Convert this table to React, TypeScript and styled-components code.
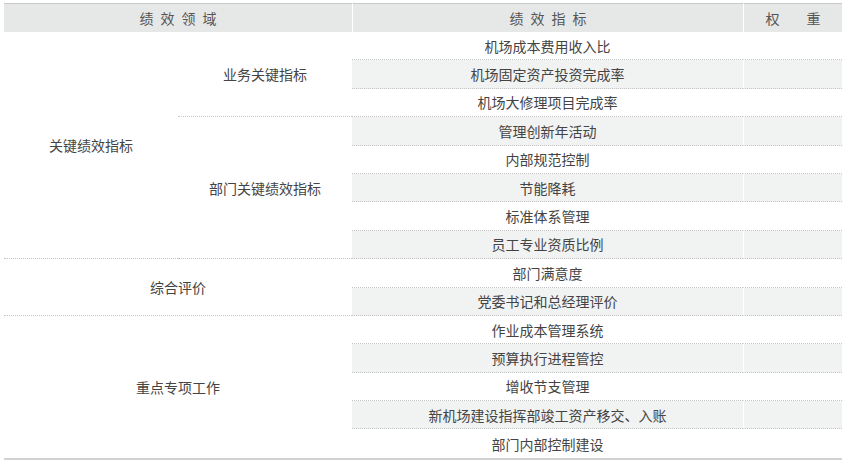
import React from "react";
import styled, { createGlobalStyle } from "styled-components";

const rows = [
  "机场成本费用收入比",
  "机场固定资产投资完成率",
  "机场大修理项目完成率",
  "管理创新年活动",
  "内部规范控制",
  "节能降耗",
  "标准体系管理",
  "员工专业资质比例",
  "部门满意度",
  "党委书记和总经理评价",
  "作业成本管理系统",
  "预算执行进程管控",
  "增收节支管理",
  "新机场建设指挥部竣工资产移交、入账",
  "部门内部控制建设",
];

// areas on the left side: [text, col start, col span, row start, row span, dotted bottom]
const areas: [string, number, number, number, number, boolean][] = [
  ["关键绩效指标", 1, 1, 2, 8, true],
  ["业务关键指标", 2, 1, 2, 3, true],
  ["部门关键绩效指标", 2, 1, 5, 5, true],
  ["综合评价", 1, 2, 10, 2, true],
  ["重点专项工作", 1, 2, 12, 5, false],
];

const App = () => {
  return (
    <>
      <Global />
      <Page>
        <Table>
          <Head $col="1 / span 2">
            <Spaced $gap="7px">绩效领域</Spaced>
          </Head>
          <Head $col="3" $divider>
            <Spaced $gap="7px">绩效指标</Spaced>
          </Head>
          <Head $col="4" $divider>
            <Spaced $gap="27px">权重</Spaced>
          </Head>

          {areas.map(([text, col, span, row, rspan, dotted]) => (
            <Area
              key={text}
              style={{
                gridColumn: `${col} / span ${span}`,
                gridRow: `${row} / span ${rspan}`,
              }}
              $dotted={dotted}
            >
              {text}
            </Area>
          ))}

          {rows.map((r, i) => (
            <React.Fragment key={r}>
              <Indicator $row={i + 2} $shade={i % 2 === 1} $last={i === rows.length - 1}>
                {r}
              </Indicator>
              <Weight $row={i + 2} $shade={i % 2 === 1} $last={i === rows.length - 1} />
            </React.Fragment>
          ))}
        </Table>
      </Page>
    </>
  );
};

export default App;

const Global = createGlobalStyle`
  body {
    margin: 0;
    background: #ffffff;
    font-family: "Noto Sans CJK SC", "Noto Sans", sans-serif;
  }
`;

const Page = styled.div`
  padding: 3px 4px 0 4px;
`;

const Table = styled.div`
  width: 838px;
  display: grid;
  grid-template-columns: 174px 174px 391px 99px;
  grid-template-rows: 29px repeat(15, 28.4px);
  border-bottom: 2px solid #d2d2d2;
  color: #444444;
  font-size: 14px;
`;

const Head = styled.div<{ $col: string; $divider?: boolean }>`
  grid-column: ${(p) => p.$col};
  grid-row: 1;
  display: flex;
  align-items: center;
  justify-content: center;
  background: #e6e7e7;
  border-top: 1px solid #c9c9c9;
  border-left: ${(p) => (p.$divider ? "1px solid #ffffff" : "none")};
  color: #555555;
  white-space: nowrap;
`;

const Spaced = styled.span<{ $gap: string }>`
  letter-spacing: ${(p) => p.$gap};
  padding-left: ${(p) => p.$gap};
  white-space: nowrap;
`;

const Area = styled.div<{ $dotted: boolean }>`
  display: flex;
  align-items: center;
  justify-content: center;
  white-space: nowrap;
  border-bottom: ${(p) => (p.$dotted ? "1px dotted #c4c4c4" : "none")};
`;

const Indicator = styled.div<{ $row: number; $shade: boolean; $last: boolean }>`
  grid-column: 3;
  grid-row: ${(p) => p.$row};
  display: flex;
  align-items: center;
  justify-content: center;
  white-space: nowrap;
  background: ${(p) => (p.$shade ? "#f1f2f2" : "transparent")};
  border-bottom: ${(p) => (p.$last ? "none" : "1px dotted #c4c4c4")};
`;

const Weight = styled.div<{ $row: number; $shade: boolean; $last: boolean }>`
  grid-column: 4;
  grid-row: ${(p) => p.$row};
  background: ${(p) => (p.$shade ? "#f1f2f2" : "transparent")};
  border-left: 1px solid #ffffff;
  border-bottom: ${(p) => (p.$last ? "none" : "1px dotted #c4c4c4")};
`;
